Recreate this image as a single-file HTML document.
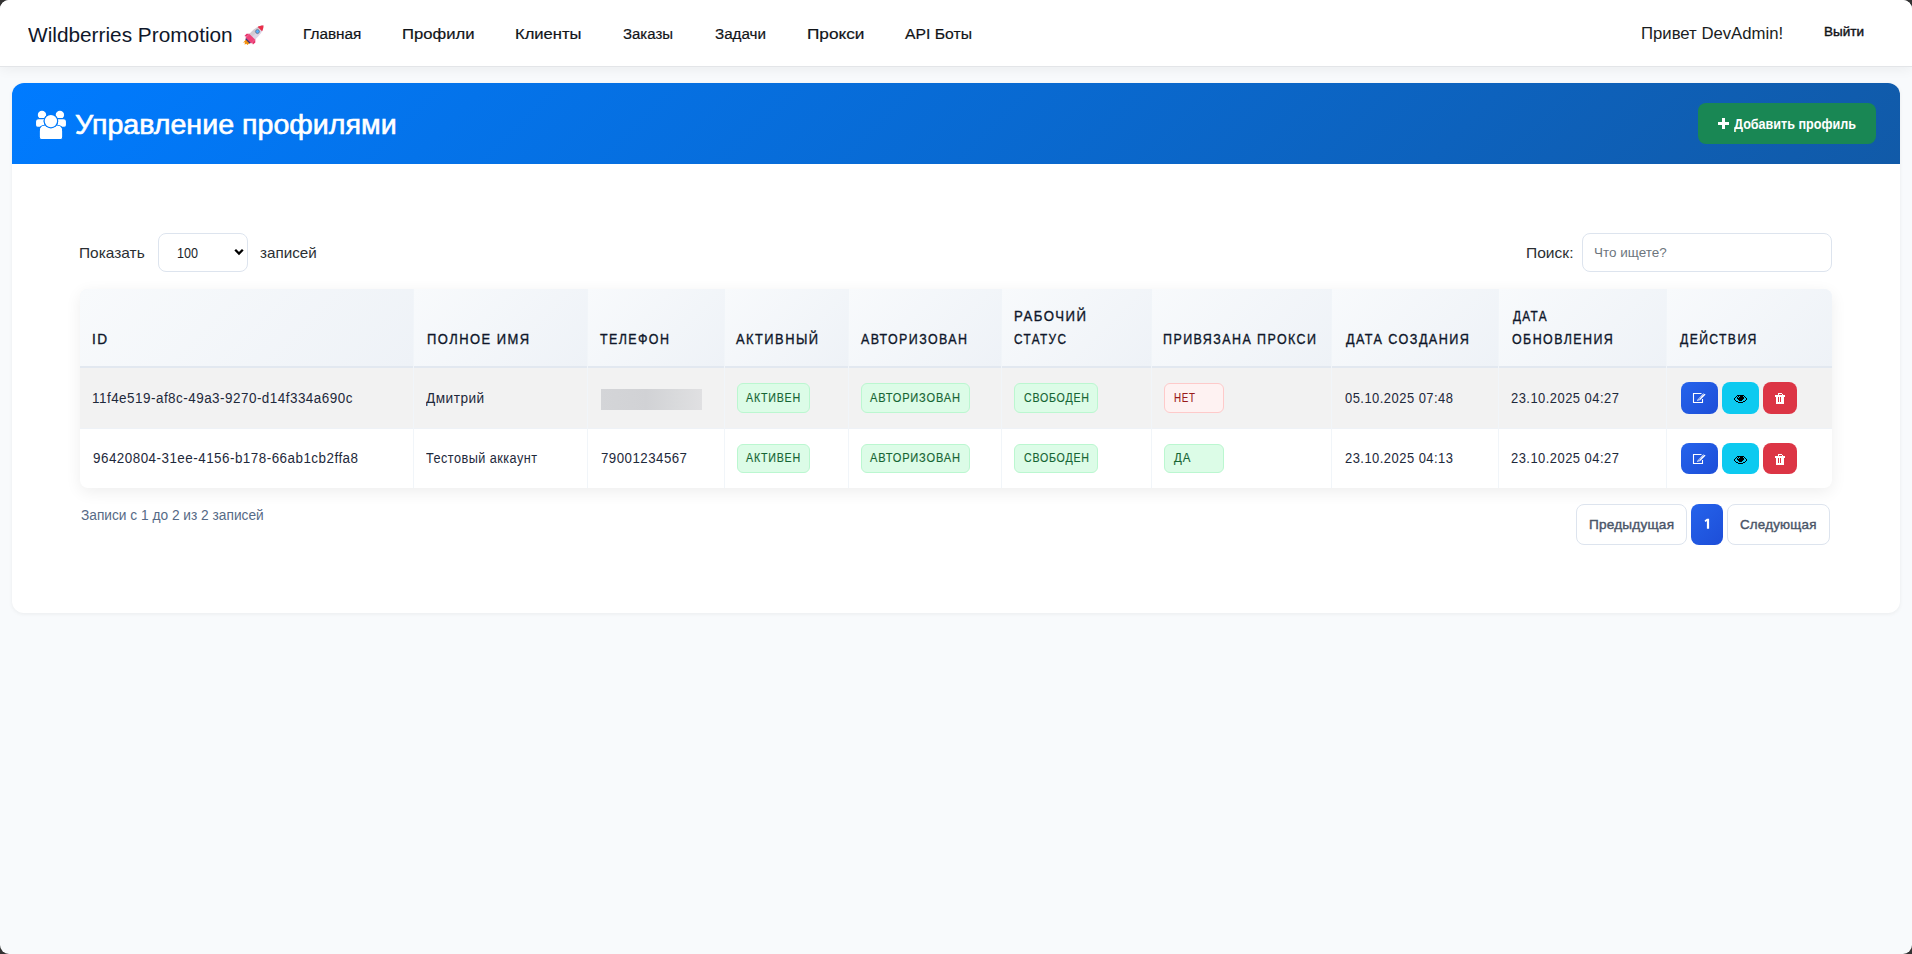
<!DOCTYPE html>
<html lang="ru">
<head>
<meta charset="utf-8">
<title>Wildberries Promotion</title>
<style>
html,body{margin:0;padding:0;width:1912px;height:954px;overflow:hidden;background:#333333;}
body{font-family:"Liberation Sans", sans-serif;}
#win{position:absolute;left:0;top:0;width:1912px;height:954px;border-radius:9px;overflow:hidden;background:#f8fafc;}
.t{position:absolute;white-space:pre;line-height:1;transform-origin:0 0;font-family:"Liberation Sans", sans-serif;}
.nav{position:absolute;left:0;top:0;width:1912px;height:66px;background:#ffffff;border-bottom:1px solid #e3e5e8;box-shadow:0 2px 12px rgba(0,0,0,0.06);}
.card{position:absolute;left:12px;top:83px;width:1888px;height:530px;background:#ffffff;border-radius:12px;box-shadow:0 1px 4px rgba(0,0,0,0.06);overflow:hidden;}
.hdr{position:absolute;left:0;top:0;width:1888px;height:81px;background:linear-gradient(135deg,#007bff 0%,#115aa8 100%);}
.btn-add{position:absolute;left:1686px;top:20px;width:178px;height:41px;background:#198754;border-radius:8px;}
.sel{position:absolute;left:158px;top:233px;width:88px;height:37px;border:1px solid #dde4ee;border-radius:8px;background:#fff;}
.inp{position:absolute;left:1582px;top:233px;width:248px;height:37px;border:1px solid #dde4ee;border-radius:8px;background:#fff;}
.tbl{position:absolute;left:80px;top:289px;width:1752px;height:199px;border-radius:8px;overflow:hidden;background:#fff;box-shadow:0 4px 16px rgba(0,0,0,0.07);}
.th{position:absolute;left:0;top:0;width:1752px;height:77px;background:#f1f5f9;border-bottom:2px solid #e2e8f0;}
.thc{position:absolute;top:0;height:77px;background:linear-gradient(135deg,#f8fafc 0%,#eef2f7 100%);}
.r1{position:absolute;left:0;top:79px;width:1752px;height:60px;background:#f2f2f2;}
.rl{position:absolute;left:0;top:139px;width:1752px;height:1px;background:#eef2f7;}
.vl{position:absolute;top:0;width:1px;height:199px;background:#f1f5f9;}
.bdg{position:absolute;box-sizing:border-box;border-radius:6px;border:1px solid;}
.bdg.g{background:#dcfce7;border-color:#bbf7d0;}
.bdg.r{background:#fef2f2;border-color:#fecaca;}
.ab{position:absolute;width:37px;height:32px;border-radius:8px;}
.pg{position:absolute;top:504px;height:41px;box-sizing:border-box;border:1px solid #dde4ee;border-radius:8px;background:#fff;}
</style>
</head>
<body>
<div id="win">
  <div class="nav"></div>
  <!-- rocket emoji -->
  <svg style="position:absolute;left:238px;top:20px" width="32" height="30" viewBox="0 0 32 30">
    <g transform="translate(16.5,14.5) rotate(45)">
      <path d="M-2.6 9.3 L2.6 9.3 L2.3 13 L1.2 12 L0 14.2 L-1.2 12 L-2.3 13.8 Z" fill="#f4900c"/>
      <path d="M-3.6 2.5 L-6.2 5 L-6 8.2 L-3.6 7.2 Z" fill="#e8336b"/>
      <path d="M3.6 2.5 L6.2 5 L6 8.2 L3.6 7.2 Z" fill="#e8336b"/>
      <path d="M0 -12.7 C3.3 -9.5 4.1 -4.5 4 0.5 L4 8.8 L-4 8.8 L-4 0.5 C-4.1 -4.5 -3.3 -9.5 0 -12.7 Z" fill="#ddd4e6"/>
      <path d="M-4 0.5 C-4.1 -4.5 -3.3 -9.5 0 -12.7 L0 8.8 L-4 8.8 Z" fill="#d2cad3"/>
      <path d="M0 -12.7 C1.8 -10.9 2.7 -9.2 3.1 -7.6 L-3.1 -7.6 C-2.7 -9.2 -1.8 -10.9 0 -12.7 Z" fill="#ea2f4a"/>
      <path d="M-4 3.2 L4 3.2 L4 8.8 L-4 8.8 Z" fill="#f0437a"/>
      <rect x="-3.2" y="8.6" width="6.4" height="1.3" fill="#3b3575"/>
      <circle cx="0" cy="-4.2" r="2" fill="#56acf7" stroke="#6f6a78" stroke-width="0.7"/>
    </g>
  </svg>

  <div class="card">
    <div class="hdr"></div>
    <div class="btn-add"></div>
  </div>
  <!-- users icon -->
  <svg style="position:absolute;left:35px;top:110px" width="32" height="30" viewBox="0 0 32 30">
    <g fill="#fff" stroke="#017afb" stroke-width="1.1">
      <circle cx="7" cy="4.9" r="4.2" stroke="none"/>
      <circle cx="24.9" cy="4.9" r="4.2" stroke="none"/>
      <path d="M3.5 8.6 H7 L10 8.6 Q10.6 8.6 10.6 9.5 V17.4 H3 Q0.5 17.4 0.5 15 V11.5 Q0.5 8.6 3.5 8.6 Z"/>
      <path d="M28.5 8.6 H25 L22 8.6 Q21.4 8.6 21.4 9.5 V17.4 H29 Q31.5 17.4 31.5 15 V11.5 Q31.5 8.6 28.5 8.6 Z"/>
      <circle cx="15.9" cy="11.1" r="6.8"/>
      <path d="M4.4 27 V21 Q4.4 15.2 10 15.2 H22 Q27.6 15.2 27.6 21 V27 Q27.6 29.5 25 29.5 H7 Q4.4 29.5 4.4 27 Z"/>
    </g>
    <path d="M4.9 21 Q4.9 15.7 10 15.7 H22 Q27.1 15.7 27.1 21 V26.5 Q27.1 29 24.6 29 H7.4 Q4.9 29 4.9 26.5 Z" fill="#fff"/>
    <circle cx="15.9" cy="11.1" r="7.3" fill="#017afb"/>
    <circle cx="15.9" cy="11.1" r="6.2" fill="#fff"/>
  </svg>
  <!-- plus icon -->
  <svg style="position:absolute;left:1718px;top:118px" width="11" height="11" viewBox="0 0 11 11"><path d="M4 0H7V4H11V7H7V11H4V7H0V4H4Z" fill="#fff"/></svg>

  <div class="sel"></div>
  <svg style="position:absolute;left:234px;top:248px" width="10" height="8" viewBox="0 0 10 8"><path d="M1.2 1.8 L5 5.6 L8.8 1.8" fill="none" stroke="#000" stroke-width="2.3"/></svg>
  <div class="inp"></div>

  <div class="tbl">
    <div class="th"></div><div class="thc" style="left:0px;width:333px"></div><div class="thc" style="left:333px;width:174px"></div><div class="thc" style="left:507px;width:137px"></div><div class="thc" style="left:644px;width:124px"></div><div class="thc" style="left:768px;width:153px"></div><div class="thc" style="left:921px;width:150px"></div><div class="thc" style="left:1071px;width:180px"></div><div class="thc" style="left:1251px;width:167px"></div><div class="thc" style="left:1418px;width:168px"></div><div class="thc" style="left:1586px;width:166px"></div>
    <div class="r1"></div>
    <div class="rl"></div>
    <div class="vl" style="left:333px"></div>
    <div class="vl" style="left:507px"></div>
    <div class="vl" style="left:644px"></div>
    <div class="vl" style="left:768px"></div>
    <div class="vl" style="left:921px"></div>
    <div class="vl" style="left:1071px"></div>
    <div class="vl" style="left:1251px"></div>
    <div class="vl" style="left:1418px"></div>
    <div class="vl" style="left:1586px"></div>
  </div>
  <!-- phone blur -->
  <div style="position:absolute;left:601px;top:389px;width:101px;height:21px;background:linear-gradient(90deg,#d4d5d8 0%,#d1d2d5 45%,#d9dadc 75%,#e0e0e2 100%);"></div>

  <div class="bdg g" style="left:737px;top:383px;width:73px;height:30px"></div>
<div class="bdg g" style="left:861px;top:383px;width:109px;height:30px"></div>
<div class="bdg g" style="left:1014px;top:383px;width:84px;height:30px"></div>
<div class="bdg g" style="left:737px;top:444px;width:73px;height:29px"></div>
<div class="bdg g" style="left:861px;top:444px;width:109px;height:29px"></div>
<div class="bdg g" style="left:1014px;top:444px;width:84px;height:29px"></div>
<div class="bdg r" style="left:1164px;top:383px;width:60px;height:30px"></div>
<div class="bdg g" style="left:1164px;top:444px;width:60px;height:29px"></div>

  <!-- action buttons -->
  <div class="ab" style="left:1681px;top:382px;background:linear-gradient(135deg,#2563eb,#1d4ed8)"></div>
  <div class="ab" style="left:1722px;top:382px;background:#0dcaf0"></div>
  <div class="ab" style="left:1763px;top:382px;width:34px;background:#dc3545"></div>
  <div class="ab" style="left:1681px;top:443px;height:31px;background:linear-gradient(135deg,#2563eb,#1d4ed8)"></div>
  <div class="ab" style="left:1722px;top:443px;height:31px;background:#0dcaf0"></div>
  <div class="ab" style="left:1763px;top:443px;width:34px;height:31px;background:#dc3545"></div>


  <svg style="position:absolute;left:1690px;top:390px" width="20" height="16" viewBox="0 0 20 16">
    <path d="M12.5 9 V12.5 H3.5 V3.5 H11.5" fill="none" stroke="#fff" stroke-width="1.1"/>
    <path d="M7.2 10 L13.3 3.6 L15.6 4.4 L9.6 10.6 L7.6 11 Z" fill="#fff"/>
    <path d="M9.2 8.9 L13.6 4.4" stroke="#2452dd" stroke-width="0.8" stroke-dasharray="1 0.8"/>
    <ellipse cx="9" cy="9.9" rx="1" ry="0.5" fill="#1d4ed8"/>
  </svg>
  <svg style="position:absolute;left:1733px;top:393px" width="16" height="12" viewBox="0 0 16 12" shape-rendering="crispEdges">
    <g fill="#000">
      <rect x="1" y="5" width="1" height="2"/><rect x="2" y="4" width="1" height="1"/><rect x="3" y="3" width="1" height="1"/>
      <rect x="2" y="7" width="1" height="1"/><rect x="3" y="8" width="2" height="1"/><rect x="5" y="9" width="5" height="1"/>
      <rect x="10" y="8" width="2" height="1"/><rect x="12" y="7" width="1" height="1"/>
      <rect x="12" y="4" width="1" height="1"/><rect x="11" y="3" width="1" height="1"/><rect x="13" y="5" width="1" height="2"/>
      <rect x="4" y="2" width="7" height="4"/><rect x="5" y="6" width="5" height="1"/><rect x="6" y="7" width="3" height="1"/>
    </g>
    <g fill="#0dcaf0"><rect x="4" y="3" width="1" height="1"/><rect x="6" y="3" width="1" height="1"/><rect x="5" y="4" width="1" height="1"/><rect x="10" y="3" width="1" height="1"/></g>
  </svg>
  <svg style="position:absolute;left:1772px;top:391px" width="16" height="16" viewBox="0 0 16 16" shape-rendering="crispEdges">
    <g fill="#fff">
      <rect x="6" y="2" width="4" height="1"/><rect x="5.5" y="3" width="1" height="1"/><rect x="9.5" y="3" width="1" height="1"/>
      <rect x="3" y="4" width="10" height="1.5"/>
      <rect x="4" y="5" width="8" height="8"/>
    </g>
    <g fill="#dc3545"><rect x="6" y="6" width="1" height="5"/><rect x="8" y="6" width="1" height="5"/></g>
  </svg>
  <svg style="position:absolute;left:1690px;top:451px" width="20" height="16" viewBox="0 0 20 16">
    <path d="M12.5 9 V12.5 H3.5 V3.5 H11.5" fill="none" stroke="#fff" stroke-width="1.1"/>
    <path d="M7.2 10 L13.3 3.6 L15.6 4.4 L9.6 10.6 L7.6 11 Z" fill="#fff"/>
    <path d="M9.2 8.9 L13.6 4.4" stroke="#2452dd" stroke-width="0.8" stroke-dasharray="1 0.8"/>
    <ellipse cx="9" cy="9.9" rx="1" ry="0.5" fill="#1d4ed8"/>
  </svg>
  <svg style="position:absolute;left:1733px;top:454px" width="16" height="12" viewBox="0 0 16 12" shape-rendering="crispEdges">
    <g fill="#000">
      <rect x="1" y="5" width="1" height="2"/><rect x="2" y="4" width="1" height="1"/><rect x="3" y="3" width="1" height="1"/>
      <rect x="2" y="7" width="1" height="1"/><rect x="3" y="8" width="2" height="1"/><rect x="5" y="9" width="5" height="1"/>
      <rect x="10" y="8" width="2" height="1"/><rect x="12" y="7" width="1" height="1"/>
      <rect x="12" y="4" width="1" height="1"/><rect x="11" y="3" width="1" height="1"/><rect x="13" y="5" width="1" height="2"/>
      <rect x="4" y="2" width="7" height="4"/><rect x="5" y="6" width="5" height="1"/><rect x="6" y="7" width="3" height="1"/>
    </g>
    <g fill="#0dcaf0"><rect x="4" y="3" width="1" height="1"/><rect x="6" y="3" width="1" height="1"/><rect x="5" y="4" width="1" height="1"/><rect x="10" y="3" width="1" height="1"/></g>
  </svg>
  <svg style="position:absolute;left:1772px;top:452px" width="16" height="16" viewBox="0 0 16 16" shape-rendering="crispEdges">
    <g fill="#fff">
      <rect x="6" y="2" width="4" height="1"/><rect x="5.5" y="3" width="1" height="1"/><rect x="9.5" y="3" width="1" height="1"/>
      <rect x="3" y="4" width="10" height="1.5"/>
      <rect x="4" y="5" width="8" height="8"/>
    </g>
    <g fill="#dc3545"><rect x="6" y="6" width="1" height="5"/><rect x="8" y="6" width="1" height="5"/></g>
  </svg>
  <!-- pagination -->
  <div class="pg" style="left:1576px;width:111px"></div>
  <div class="pg" style="left:1691px;width:32px;border:none;background:linear-gradient(135deg,#2563eb,#1d4ed8)"></div>
  <svg style="position:absolute;left:1700px;top:515px" width="14" height="18" viewBox="0 0 14 18"><path d="M6.9 3.8 H9.1 V13.8 H6.9 Z M4.6 5.6 L6.9 3.8 L6.9 5.9 L5.2 6.9 Z" fill="#fff"/></svg>
  <div class="pg" style="left:1727px;width:103px"></div>

  <span class="t" style="left:28.0px;top:25.07px;font-size:20px;font-weight:400;color:#0f172a;letter-spacing:0px;transform:scaleX(1.0405);">Wildberries Promotion</span>
<span class="t" style="left:303.3px;top:25.88px;font-size:15.5px;font-weight:400;color:#111418;letter-spacing:0px;transform:scaleX(0.9904);-webkit-text-stroke:0.2px #111418;">Главная</span>
<span class="t" style="left:402.3px;top:25.88px;font-size:15.5px;font-weight:400;color:#111418;letter-spacing:0px;transform:scaleX(1.0730);-webkit-text-stroke:0.2px #111418;">Профили</span>
<span class="t" style="left:515.3px;top:25.88px;font-size:15.5px;font-weight:400;color:#111418;letter-spacing:0px;transform:scaleX(1.0690);-webkit-text-stroke:0.2px #111418;">Клиенты</span>
<span class="t" style="left:623.0px;top:25.88px;font-size:15.5px;font-weight:400;color:#111418;letter-spacing:0px;transform:scaleX(0.9650);-webkit-text-stroke:0.2px #111418;">Заказы</span>
<span class="t" style="left:715.0px;top:25.88px;font-size:15.5px;font-weight:400;color:#111418;letter-spacing:0px;transform:scaleX(0.9799);-webkit-text-stroke:0.2px #111418;">Задачи</span>
<span class="t" style="left:807.3px;top:25.88px;font-size:15.5px;font-weight:400;color:#111418;letter-spacing:0px;transform:scaleX(1.1102);-webkit-text-stroke:0.2px #111418;">Прокси</span>
<span class="t" style="left:905.0px;top:25.88px;font-size:15.5px;font-weight:400;color:#111418;letter-spacing:0px;transform:scaleX(1.0154);-webkit-text-stroke:0.2px #111418;">API Боты</span>
<span class="t" style="left:1641.3px;top:25.66px;font-size:16px;font-weight:400;color:#1a1d21;letter-spacing:0px;transform:scaleX(1.0447);">Привет DevAdmin!</span>
<span class="t" style="left:1824.0px;top:24.57px;font-size:13.5px;font-weight:400;color:#111418;letter-spacing:0px;-webkit-text-stroke:0.45px #111418;">Выйти</span>
<span class="t" style="left:75.0px;top:111.74px;font-size:27px;font-weight:400;color:#ffffff;letter-spacing:0px;transform:scaleX(1.0597);-webkit-text-stroke:0.6px #fff;">Управление профилями</span>
<span class="t" style="left:1734.0px;top:117.45px;font-size:14px;font-weight:700;color:#ffffff;letter-spacing:0px;transform:scaleX(0.8995);">Добавить профиль</span>
<span class="t" style="left:78.7px;top:245.30px;font-size:15px;font-weight:400;color:#2b2f33;letter-spacing:0px;transform:scaleX(1.0305);">Показать</span>
<span class="t" style="left:177.0px;top:245.30px;font-size:15px;font-weight:400;color:#212529;letter-spacing:0px;transform:scaleX(0.8390);">100</span>
<span class="t" style="left:260.0px;top:245.30px;font-size:15px;font-weight:400;color:#2b2f33;letter-spacing:0px;transform:scaleX(1.0136);">записей</span>
<span class="t" style="left:1525.8px;top:245.30px;font-size:15px;font-weight:400;color:#2b2f33;letter-spacing:0px;transform:scaleX(1.0378);">Поиск:</span>
<span class="t" style="left:1594.3px;top:246.27px;font-size:13.5px;font-weight:400;color:#6c757d;letter-spacing:0px;transform:scaleX(0.9973);">Что ищете?</span>
<span class="t" style="left:91.8px;top:332.15px;font-size:14px;font-weight:400;color:#0f172a;letter-spacing:1.6px;transform:scaleX(0.9742);-webkit-text-stroke:0.35px #0f172a;">ID</span>
<span class="t" style="left:426.5px;top:332.15px;font-size:14px;font-weight:400;color:#0f172a;letter-spacing:1.6px;transform:scaleX(0.9250);-webkit-text-stroke:0.35px #0f172a;">ПОЛНОЕ ИМЯ</span>
<span class="t" style="left:599.8px;top:332.15px;font-size:14px;font-weight:400;color:#0f172a;letter-spacing:1.6px;transform:scaleX(0.8876);-webkit-text-stroke:0.35px #0f172a;">ТЕЛЕФОН</span>
<span class="t" style="left:736.4px;top:332.15px;font-size:14px;font-weight:400;color:#0f172a;letter-spacing:1.6px;transform:scaleX(0.9192);-webkit-text-stroke:0.35px #0f172a;">АКТИВНЫЙ</span>
<span class="t" style="left:860.5px;top:332.15px;font-size:14px;font-weight:400;color:#0f172a;letter-spacing:1.6px;transform:scaleX(0.8873);-webkit-text-stroke:0.35px #0f172a;">АВТОРИЗОВАН</span>
<span class="t" style="left:1014.2px;top:308.85px;font-size:14px;font-weight:400;color:#0f172a;letter-spacing:1.6px;transform:scaleX(0.9414);-webkit-text-stroke:0.35px #0f172a;">РАБОЧИЙ</span>
<span class="t" style="left:1014.2px;top:332.45px;font-size:14px;font-weight:400;color:#0f172a;letter-spacing:1.6px;transform:scaleX(0.8450);-webkit-text-stroke:0.35px #0f172a;">СТАТУС</span>
<span class="t" style="left:1163.4px;top:332.15px;font-size:14px;font-weight:400;color:#0f172a;letter-spacing:1.6px;transform:scaleX(0.8909);-webkit-text-stroke:0.35px #0f172a;">ПРИВЯЗАНА ПРОКСИ</span>
<span class="t" style="left:1345.6px;top:332.15px;font-size:14px;font-weight:400;color:#0f172a;letter-spacing:1.6px;transform:scaleX(0.9000);-webkit-text-stroke:0.35px #0f172a;">ДАТА СОЗДАНИЯ</span>
<span class="t" style="left:1512.5px;top:308.85px;font-size:14px;font-weight:400;color:#0f172a;letter-spacing:1.6px;transform:scaleX(0.8421);-webkit-text-stroke:0.35px #0f172a;">ДАТА</span>
<span class="t" style="left:1511.8px;top:332.45px;font-size:14px;font-weight:400;color:#0f172a;letter-spacing:1.6px;transform:scaleX(0.8880);-webkit-text-stroke:0.35px #0f172a;">ОБНОВЛЕНИЯ</span>
<span class="t" style="left:1680.2px;top:332.15px;font-size:14px;font-weight:400;color:#0f172a;letter-spacing:1.6px;transform:scaleX(0.8692);-webkit-text-stroke:0.35px #0f172a;">ДЕЙСТВИЯ</span>
<span class="t" style="left:92.3px;top:390.85px;font-size:14px;font-weight:400;color:#1e293b;letter-spacing:0.5px;transform:scaleX(0.9609);">11f4e519-af8c-49a3-9270-d14f334a690c</span>
<span class="t" style="left:92.5px;top:450.75px;font-size:14px;font-weight:400;color:#1e293b;letter-spacing:0.5px;transform:scaleX(0.9585);">96420804-31ee-4156-b178-66ab1cb2ffa8</span>
<span class="t" style="left:426.0px;top:390.85px;font-size:14px;font-weight:400;color:#1e293b;letter-spacing:0.5px;transform:scaleX(0.9733);">Дмитрий</span>
<span class="t" style="left:426.0px;top:450.75px;font-size:14px;font-weight:400;color:#1e293b;letter-spacing:0.5px;transform:scaleX(0.9067);">Тестовый аккаунт</span>
<span class="t" style="left:601.0px;top:450.75px;font-size:14px;font-weight:400;color:#1e293b;letter-spacing:0.5px;transform:scaleX(0.9486);">79001234567</span>
<span class="t" style="left:1344.5px;top:390.85px;font-size:14px;font-weight:400;color:#1e293b;letter-spacing:0.5px;transform:scaleX(0.9270);">05.10.2025 07:48</span>
<span class="t" style="left:1344.5px;top:450.75px;font-size:14px;font-weight:400;color:#1e293b;letter-spacing:0.5px;transform:scaleX(0.9270);">23.10.2025 04:13</span>
<span class="t" style="left:1511.2px;top:390.85px;font-size:14px;font-weight:400;color:#1e293b;letter-spacing:0.5px;transform:scaleX(0.9258);">23.10.2025 04:27</span>
<span class="t" style="left:1511.2px;top:450.75px;font-size:14px;font-weight:400;color:#1e293b;letter-spacing:0.5px;transform:scaleX(0.9258);">23.10.2025 04:27</span>
<span class="t" style="left:746.0px;top:391.62px;font-size:12.5px;font-weight:400;color:#166534;letter-spacing:0.9px;transform:scaleX(0.8551);-webkit-text-stroke:0.15px #166534;">АКТИВЕН</span>
<span class="t" style="left:869.9px;top:391.62px;font-size:12.5px;font-weight:400;color:#166534;letter-spacing:0.9px;transform:scaleX(0.8871);-webkit-text-stroke:0.15px #166534;">АВТОРИЗОВАН</span>
<span class="t" style="left:1024.0px;top:391.62px;font-size:12.5px;font-weight:400;color:#166534;letter-spacing:0.9px;transform:scaleX(0.8508);-webkit-text-stroke:0.15px #166534;">СВОБОДЕН</span>
<span class="t" style="left:746.0px;top:452.02px;font-size:12.5px;font-weight:400;color:#166534;letter-spacing:0.9px;transform:scaleX(0.8551);-webkit-text-stroke:0.15px #166534;">АКТИВЕН</span>
<span class="t" style="left:869.9px;top:452.02px;font-size:12.5px;font-weight:400;color:#166534;letter-spacing:0.9px;transform:scaleX(0.8871);-webkit-text-stroke:0.15px #166534;">АВТОРИЗОВАН</span>
<span class="t" style="left:1024.0px;top:452.02px;font-size:12.5px;font-weight:400;color:#166534;letter-spacing:0.9px;transform:scaleX(0.8508);-webkit-text-stroke:0.15px #166534;">СВОБОДЕН</span>
<span class="t" style="left:1173.8px;top:391.62px;font-size:12.5px;font-weight:400;color:#991b1b;letter-spacing:0.9px;transform:scaleX(0.7835);-webkit-text-stroke:0.15px #991b1b;">НЕТ</span>
<span class="t" style="left:1173.7px;top:452.02px;font-size:12.5px;font-weight:400;color:#166534;letter-spacing:0.9px;transform:scaleX(0.9211);-webkit-text-stroke:0.15px #166534;">ДА</span>
<span class="t" style="left:80.5px;top:508.35px;font-size:14px;font-weight:400;color:#566a86;letter-spacing:0px;transform:scaleX(0.9798);">Записи с 1 до 2 из 2 записей</span>
<span class="t" style="left:1589.2px;top:517.77px;font-size:13.5px;font-weight:400;color:#4a5568;letter-spacing:0.2px;transform:scaleX(1.0076);-webkit-text-stroke:0.4px #4a5568;">Предыдущая</span>
<span class="t" style="left:1740.4px;top:517.77px;font-size:13.5px;font-weight:400;color:#4a5568;letter-spacing:0.2px;transform:scaleX(0.9914);-webkit-text-stroke:0.4px #4a5568;">Следующая</span>
</div>
</body>
</html>
